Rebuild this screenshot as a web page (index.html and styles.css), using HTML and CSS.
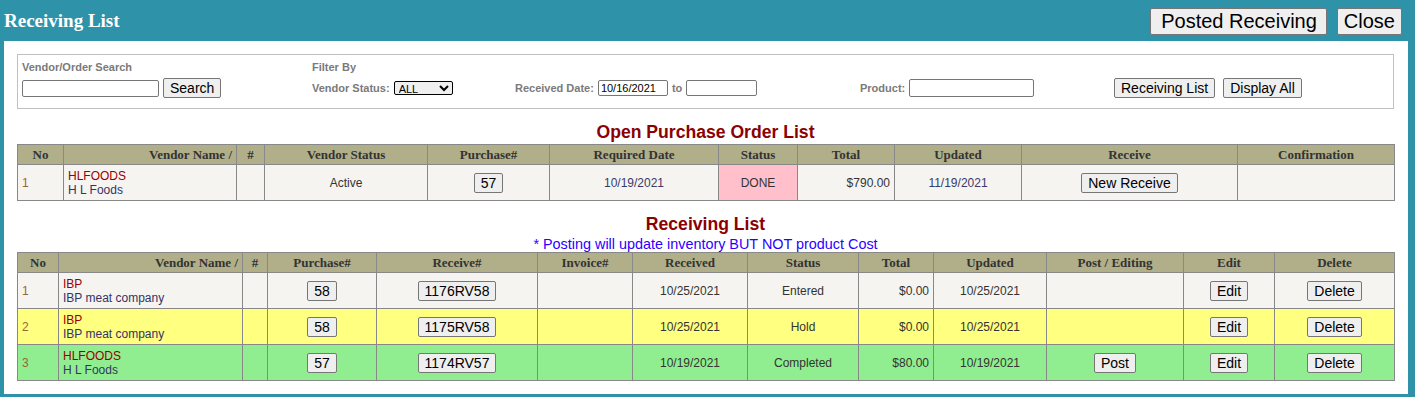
FILE: index.html
```html
<!DOCTYPE html>
<html lang="en">
<head>
<meta charset="UTF-8">
<title>Receiving List</title>
<link rel="stylesheet" href="styles.css">
</head>
<body>
<div class="titlebar">
  <div class="app-title">Receiving List</div>
  <div class="top-buttons">
    <button class="big-btn posted">Posted Receiving</button>
    <button class="big-btn">Close</button>
  </div>
</div>

<div class="panel">
  <div class="filter-box">
    <div class="group">
      <div class="lbl">Vendor/Order Search</div>
      <div class="ctrls">
        <input type="text" class="search-input">
        <button class="btn">Search</button>
      </div>
    </div>
    <div class="group">
      <div class="lbl">Filter By</div>
      <div class="ctrls">
        <span class="lbl">Vendor Status:</span>
        <select class="status-select"><option>ALL</option></select>
      </div>
    </div>
    <div class="group">
      <div class="ctrls">
        <span class="lbl">Received Date:</span>
        <input type="text" class="date-input" value="10/16/2021">
        <span class="lbl">to</span>
        <input type="text" class="date-input to-input">
      </div>
    </div>
    <div class="group">
      <div class="ctrls">
        <span class="lbl">Product:</span>
        <input type="text" class="product-input">
      </div>
    </div>
    <div class="group">
      <div class="ctrls wide">
        <button class="btn">Receiving List</button>
        <button class="btn">Display All</button>
      </div>
    </div>
  </div>

  <h2 class="section-title first">Open Purchase Order List</h2>
  <table class="grid po-table">
    <colgroup>
      <col><col><col><col><col><col><col><col><col><col><col>
    </colgroup>
    <tr>
      <th>No</th><th class="right">Vendor Name /</th><th>#</th><th>Vendor Status</th><th>Purchase#</th>
      <th>Required Date</th><th>Status</th><th>Total</th><th>Updated</th><th>Receive</th><th>Confirmation</th>
    </tr>
    <tr class="row-plain">
      <td class="no">1</td>
      <td><span class="code">HLFOODS</span><br><span class="vname">H L Foods</span></td>
      <td></td>
      <td class="center">Active</td>
      <td class="center"><button class="btn">57</button></td>
      <td class="center date">10/19/2021</td>
      <td class="center done">DONE</td>
      <td class="right">$790.00</td>
      <td class="center date">11/19/2021</td>
      <td class="center"><button class="btn">New Receive</button></td>
      <td></td>
    </tr>
  </table>

  <h2 class="section-title">Receiving List</h2>
  <div class="note">* Posting will update inventory BUT NOT product Cost</div>
  <table class="grid rcv-table">
    <colgroup>
      <col><col><col><col><col><col><col><col><col><col><col><col><col>
    </colgroup>
    <tr>
      <th>No</th><th class="right">Vendor Name /</th><th>#</th><th>Purchase#</th><th>Receive#</th><th>Invoice#</th>
      <th>Received</th><th>Status</th><th>Total</th><th>Updated</th><th>Post / Editing</th><th>Edit</th><th>Delete</th>
    </tr>
    <tr class="row-plain">
      <td class="no">1</td>
      <td><span class="code">IBP</span><br><span class="vname">IBP meat company</span></td>
      <td></td>
      <td class="center"><button class="btn">58</button></td>
      <td class="center"><button class="btn">1176RV58</button></td>
      <td></td>
      <td class="center">10/25/2021</td>
      <td class="center">Entered</td>
      <td class="right">$0.00</td>
      <td class="center">10/25/2021</td>
      <td></td>
      <td class="center"><button class="btn">Edit</button></td>
      <td class="center"><button class="btn">Delete</button></td>
    </tr>
    <tr class="row-hold">
      <td class="no">2</td>
      <td><span class="code">IBP</span><br><span class="vname">IBP meat company</span></td>
      <td></td>
      <td class="center"><button class="btn">58</button></td>
      <td class="center"><button class="btn">1175RV58</button></td>
      <td></td>
      <td class="center">10/25/2021</td>
      <td class="center">Hold</td>
      <td class="right">$0.00</td>
      <td class="center">10/25/2021</td>
      <td></td>
      <td class="center"><button class="btn">Edit</button></td>
      <td class="center"><button class="btn">Delete</button></td>
    </tr>
    <tr class="row-done">
      <td class="no">3</td>
      <td><span class="code">HLFOODS</span><br><span class="vname">H L Foods</span></td>
      <td></td>
      <td class="center"><button class="btn">57</button></td>
      <td class="center"><button class="btn">1174RV57</button></td>
      <td></td>
      <td class="center">10/19/2021</td>
      <td class="center">Completed</td>
      <td class="right">$80.00</td>
      <td class="center">10/19/2021</td>
      <td class="center"><button class="btn">Post</button></td>
      <td class="center"><button class="btn">Edit</button></td>
      <td class="center"><button class="btn">Delete</button></td>
    </tr>
  </table>
</div>
</body>
</html>
```

FILE: styles.css
```css
body {
  margin: 0;
  background-color: #2e93a8;
  font-family: "Liberation Sans", Arial, sans-serif;
  color: #333;
}

.titlebar {
  height: 41px;
  display: flex;
  justify-content: space-between;
  align-items: center;
  padding: 0 13px 0 4px;
}

.app-title {
  font-family: "Liberation Serif", "Times New Roman", serif;
  font-weight: bold;
  font-size: 19px;
  color: #fff;
  margin-top: 1px;
}

.top-buttons {
  display: flex;
  gap: 10px;
  margin-top: 1px;
}

button {
  font-family: "Liberation Sans", Arial, sans-serif;
  color: #000;
  background-color: #efefef;
  border: 1px solid #767676;
  border-radius: 2px;
  padding: 1px 6px;
  cursor: pointer;
}

.big-btn {
  font-size: 20px;
  line-height: 23px;
}

.big-btn.posted {
  padding: 1px 9px 1px 10px;
}

.btn {
  font-size: 14px;
  line-height: 16px;
}

.panel {
  background-color: #fff;
  margin: 0 7px 0 4px;
  padding: 13px 14px 13px 13px;
}

/* filter area */
.filter-box {
  border: 1px solid #c0c0c0;
  height: 55px;
  box-sizing: border-box;
  padding: 0 4px 10px;
  display: grid;
  grid-template-columns: 290px 203px 345px 254px auto;
  align-items: end;
}

.group {
  display: flex;
  flex-direction: column;
}

.group > .lbl {
  line-height: 13px;
  margin-bottom: 4px;
}

.lbl {
  font-size: 11px;
  font-weight: bold;
  color: #7a7a7a;
}

.ctrls {
  display: flex;
  align-items: center;
  gap: 4px;
  height: 20px;
}

.ctrls.wide {
  gap: 8px;
}

input {
  font-family: "Liberation Sans", Arial, sans-serif;
  font-size: 11px;
  border: 1px solid #767676;
  border-radius: 2px;
  padding: 0 2px;
  box-sizing: border-box;
  color: #000;
}

.search-input {
  width: 137px;
  height: 17px;
}

.status-select {
  width: 59px;
  height: 14px;
  font-size: 11px;
  padding: 0;
  border: 1px solid #000;
  border-radius: 2px;
  font-family: "Liberation Sans", Arial, sans-serif;
}

.date-input {
  width: 70px;
  height: 16px;
}

.to-input {
  width: 71px;
}

.product-input {
  width: 125px;
  height: 18px;
}

/* section titles */
.section-title {
  font-size: 17.6px;
  line-height: 20px;
  color: #8b0000;
  text-align: center;
  margin: 13px 0 2px;
}

.note {
  font-size: 14.4px;
  line-height: 16px;
  color: #2b00ff;
  text-align: center;
}

/* tables */
.grid {
  width: 1377px;
  table-layout: fixed;
  border-collapse: collapse;
  font-size: 12px;
}

.grid th,
.grid td {
  border: 1px solid #888;
  padding: 0 4px;
}

.grid th {
  background-color: #b0af8a;
  font-family: "Liberation Serif", "Book Antiqua", Palatino, serif;
  font-size: 13px;
  color: #333;
  height: 19px;
  text-align: center;
  white-space: nowrap;
}

.grid td {
  height: 35px;
  line-height: 14px;
}

.grid .right {
  text-align: right;
}

.grid .center {
  text-align: center;
}

.no {
  color: #996633;
}

.code {
  color: #990000;
}

.vname {
  color: #333366;
}

.date {
  color: #3a3a6a;
}

.row-plain td {
  background-color: #f5f4f1;
}

.row-hold td {
  background-color: #ffff80;
}

.row-done td {
  background-color: #90ee90;
}

.row-plain td.done {
  background-color: #ffc0cb;
}

.po-table col:nth-child(1) { width: 46px; }
.po-table col:nth-child(2) { width: 173px; }
.po-table col:nth-child(3) { width: 28px; }
.po-table col:nth-child(4) { width: 163px; }
.po-table col:nth-child(5) { width: 122px; }
.po-table col:nth-child(6) { width: 169px; }
.po-table col:nth-child(7) { width: 79px; }
.po-table col:nth-child(8) { width: 97px; }
.po-table col:nth-child(9) { width: 127px; }
.po-table col:nth-child(10) { width: 216px; }
.po-table col:nth-child(11) { width: 157px; }

.rcv-table col:nth-child(1) { width: 41px; }
.rcv-table col:nth-child(2) { width: 184px; }
.rcv-table col:nth-child(3) { width: 25px; }
.rcv-table col:nth-child(4) { width: 109px; }
.rcv-table col:nth-child(5) { width: 161px; }
.rcv-table col:nth-child(6) { width: 95px; }
.rcv-table col:nth-child(7) { width: 115px; }
.rcv-table col:nth-child(8) { width: 111px; }
.rcv-table col:nth-child(9) { width: 75px; }
.rcv-table col:nth-child(10) { width: 113px; }
.rcv-table col:nth-child(11) { width: 137px; }
.rcv-table col:nth-child(12) { width: 91px; }
.rcv-table col:nth-child(13) { width: 120px; }
```
